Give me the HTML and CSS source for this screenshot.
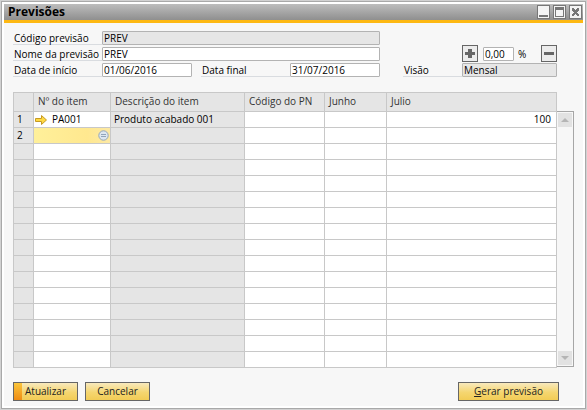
FILE: index.html
```html
<!DOCTYPE html>
<html lang="pt-BR">
<head>
<meta charset="utf-8">
<title>Previsões</title>
<link rel="stylesheet" href="styles.css">
</head>
<body>
<main class="window">
  <header class="titlebar">
    <h1>Previsões</h1>
    <div class="controls">
      <button type="button" aria-label="Minimizar"><svg viewBox="0 0 11 12"><path d="M1 9h9v2H1z"/></svg></button>
      <button type="button" aria-label="Maximizar"><svg viewBox="0 0 11 12"><path fill-rule="evenodd" d="M1 1h9v10H1zM2 4v6h7V4z"/></svg></button>
      <button type="button" aria-label="Fechar"><svg viewBox="0 0 11 12"><path d="M2 2h2v1h1v1h1V3h1V2h2v3H8v1H7v1h1v1h1v2H7V9H6V8H5v1H4v1H2V8h1V7h1V6H3V5H2z"/></svg></button>
    </div>
  </header>
  <form class="content">
    <section class="fields">
      <div class="main-fields">
        <label for="code">Código previsão</label>
        <input class="wide readonly" id="code" value="PREV" readonly>
        <label for="name">Nome da previsão</label>
        <input class="wide" id="name" value="PREV">
        <label for="start">Data de início</label>
        <input id="start" value="01/06/2016">
        <label class="end-label" for="end">Data final</label>
        <input id="end" value="31/07/2016">
      </div>
      <div class="view-fields">
        <div class="percent">
          <button type="button" aria-label="Aumentar"><svg viewBox="0 0 14 15"><path d="M5 3h4v3h3v3H9v3H5V9H2V6h3z"/></svg></button>
          <input id="pct" value="0,00">
          <label for="pct">%</label>
          <button class="minus" type="button" aria-label="Diminuir"><svg viewBox="0 0 14 15"><path d="M2 6h10v3H2z"/></svg></button>
        </div>
        <label class="view-label" for="view">Visão</label>
        <input class="readonly" id="view" value="Mensal" readonly>
      </div>
    </section>
    <section class="grid">
      <table>
        <colgroup><col class="c-num"><col class="c-item"><col class="c-desc"><col class="c-pn"><col class="c-jun"><col></colgroup>
        <thead>
          <tr><th></th><th>Nº do item</th><th>Descrição do item</th><th>Código do PN</th><th>Junho</th><th>Julio</th></tr>
        </thead>
        <tbody>
          <tr><td>1</td><td><div class="item"><svg class="arrow" viewBox="0 0 12 10"><path d="M.5 3.500h6v-3L11.500 5 6.500 9.500v-3h-6z"/></svg>PA001</div></td><td>Produto acabado 001</td><td></td><td></td><td class="amount">100</td></tr>
          <tr><td>2</td><td class="active"><div class="picker"><input aria-label="Nº do item"><button type="button" aria-label="Selecionar"><svg viewBox="0 0 11 11"><circle cx="5.500" cy="5.500" r="4.700"/><path d="M3 4.500h5M3 6.500h5"/></svg></button></div></td><td></td><td></td><td></td><td></td></tr>
          <tr><td></td><td></td><td></td><td></td><td></td><td></td></tr>
          <tr><td></td><td></td><td></td><td></td><td></td><td></td></tr>
          <tr><td></td><td></td><td></td><td></td><td></td><td></td></tr>
          <tr><td></td><td></td><td></td><td></td><td></td><td></td></tr>
          <tr><td></td><td></td><td></td><td></td><td></td><td></td></tr>
          <tr><td></td><td></td><td></td><td></td><td></td><td></td></tr>
          <tr><td></td><td></td><td></td><td></td><td></td><td></td></tr>
          <tr><td></td><td></td><td></td><td></td><td></td><td></td></tr>
          <tr><td></td><td></td><td></td><td></td><td></td><td></td></tr>
          <tr><td></td><td></td><td></td><td></td><td></td><td></td></tr>
          <tr><td></td><td></td><td></td><td></td><td></td><td></td></tr>
          <tr><td></td><td></td><td></td><td></td><td></td><td></td></tr>
          <tr><td></td><td></td><td></td><td></td><td></td><td></td></tr>
          <tr><td></td><td></td><td></td><td></td><td></td><td></td></tr>
        </tbody>
      </table>
      <div class="scrollbar">
        <button type="button" aria-label="Rolar para cima"><svg viewBox="0 0 8 4"><path d="M0 4h8L4 0z"/></svg></button>
        <button type="button" aria-label="Rolar para baixo"><svg viewBox="0 0 8 4"><path d="M0 0h8L4 4z"/></svg></button>
      </div>
    </section>
    <footer class="actions">
      <button class="primary" type="submit">Atualizar</button>
      <button type="button">Cancelar</button>
      <button class="generate" type="button"><span><u>G</u>erar previsão</span></button>
    </footer>
  </form>
</main>
</body>
</html>
```
FILE: styles.css
```css
* { box-sizing: border-box; }

body {
  margin: 0;
  padding: 1px;
  background: #d2d2d2;
  color: #000;
  font: 10px/12px "Open Sans", "Noto Sans", sans-serif;
}

button, input {
  margin: 0;
  padding: 0;
  border-radius: 0;
  color: inherit;
  font: inherit;
}

svg { display: block; }

.window {
  display: flex;
  flex-direction: column;
  min-height: calc(100vh - 2px);
  border: 1px solid #a9a9a9;
  padding: 2px;
  background: #fff;
}

.titlebar {
  display: flex;
  align-items: center;
  justify-content: space-between;
  height: 19px;
  padding: 0 1px 0 4px;
  border-bottom: 3px solid #fdb813;
  background: linear-gradient(#bdbdbd, #8f8f8f);
}

.titlebar h1 {
  margin: 0;
  font: bold 12px/16px "Open Sans", "Noto Sans", sans-serif;
}

.controls { display: flex; gap: 3px; }

.controls button {
  width: 13px;
  height: 14px;
  border: 1px solid #777;
  background: #f4f4f4;
}

.controls svg { width: 11px; height: 12px; fill: #777; }

.content {
  flex: 1;
  padding: 8px 9px 5px;
  background: #f7f7f7;
}

.fields {
  display: flex;
  justify-content: space-between;
  margin-right: 17px;
}

.main-fields {
  display: grid;
  grid-template-columns: 89px 90px 98px 90px;
  grid-auto-rows: 14px;
  row-gap: 2px;
}

.main-fields label, .view-label {
  padding-left: 1px;
  border-bottom: 1px solid #d9dce0;
  line-height: 14px;
  white-space: nowrap;
}

.main-fields .end-label { margin-left: 9px; }
.wide { grid-column: 2 / 5; }

.fields input {
  width: 100%;
  min-width: 0;
  height: 14px;
  padding: 0 1px;
  border: 1px solid #b3b3b3;
  border-radius: 1px;
  background: #fff;
}

.fields .readonly { background: #e6e6e6; }

.view-fields {
  display: grid;
  grid-template-columns: 59px 95px;
  grid-template-rows: 17px 14px;
  align-content: end;
  row-gap: 1px;
}

.percent {
  display: flex;
  grid-column: 2;
  align-items: center;
}

.percent button {
  flex: none;
  width: 16px;
  height: 17px;
  border: 1px solid #666;
  background: #ececec;
}

.percent button svg { width: 14px; height: 15px; fill: #666; }
.percent .minus { margin-left: auto; }
.fields .percent input { width: 31px; margin: 0 4px 0 5px; }

.grid {
  display: flex;
  margin-top: 15px;
}

table {
  flex: 1;
  width: 0;
  border: solid #c8c8c8;
  border-width: 1px 0 0 1px;
  border-spacing: 0;
  table-layout: fixed;
}

.c-num { width: 20px; }
.c-item { width: 77px; }
.c-desc { width: 134px; }
.c-pn { width: 80px; }
.c-jun { width: 62px; }

th, td {
  height: 16px;
  padding: 0 3px;
  border: solid #c8c8c8;
  border-width: 0 1px 1px 0;
  background: #fff;
  line-height: 15px;
  text-align: left;
  white-space: nowrap;
}

th {
  height: 19px;
  padding: 0 3px 2px 4px;
  background: #e5e5e5;
  color: #333;
  font-weight: normal;
}

td:first-child, td:nth-child(3) { background: #e5e5e5; }
td:nth-child(2) { padding: 0 1px; }
td.amount { padding-right: 5px; text-align: right; }

.item {
  display: flex;
  gap: 5px;
  align-items: center;
}

.arrow {
  width: 12px;
  height: 10px;
  fill: #ffd942;
  stroke: #c69a24;
}

td.active { background: linear-gradient(90deg, #fff09a, #ffe88f 70%, #fde9a5); }

.picker { display: flex; align-items: center; height: 15px; }

.picker input {
  flex: 1;
  width: 0;
  height: 13px;
  border: 0;
  background: none;
}

.picker button {
  width: 11px;
  height: 11px;
  border: 0;
  background: none;
}

.picker svg { width: 11px; fill: #dde7f0; stroke: #91a5bb; }

.scrollbar {
  display: flex;
  flex-direction: column;
  justify-content: space-between;
  width: 17px;
  margin: 19px 0 1px;
  padding: 1px;
  border: solid #a6a6a6;
  border-width: 1px 1px 1px 0;
}

.scrollbar button {
  display: grid;
  place-items: center;
  width: 14px;
  height: 14px;
  border: 0;
  background: #e2e2e2;
}

.scrollbar svg { width: 8px; height: 4px; fill: #b5b5b5; }

.actions {
  display: flex;
  gap: 7px;
  margin: 14px 15px 0 0;
}

.actions button {
  width: 65px;
  height: 19px;
  padding-bottom: 2px;
  border: 1px solid #666;
  background: linear-gradient(#f8e9bd, #f5d670 55%, #f2cc55);
  color: #222;
}

.actions .primary {
  background: linear-gradient(#fbc63c, #ef8c14) left / 8px 100% no-repeat, linear-gradient(#f8e9bd, #f5d670 55%, #f2cc55);
}

.actions .generate { width: 101px; margin-left: auto; }
```
